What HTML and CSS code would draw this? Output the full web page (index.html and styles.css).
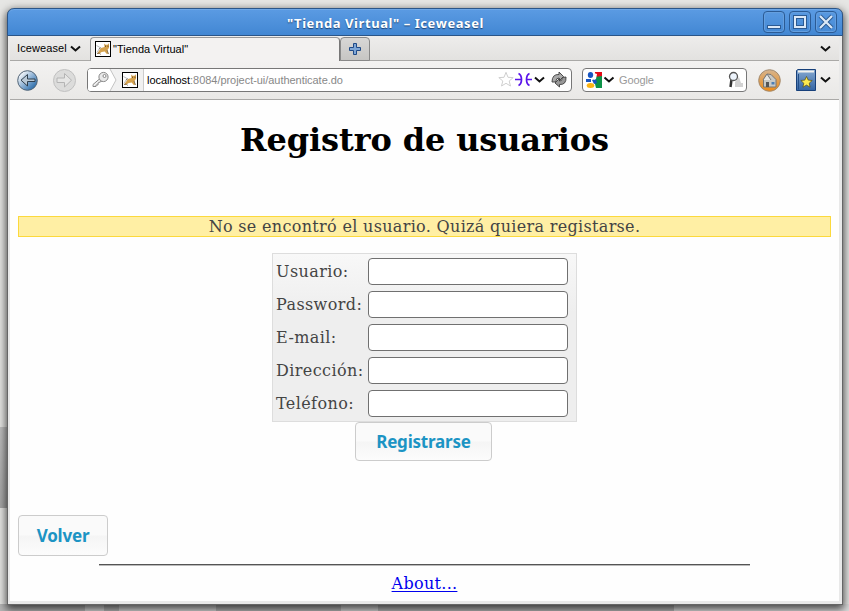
FILE: index.html
```
<!DOCTYPE html>
<html lang="es">
<head>
<meta charset="utf-8">
<title>"Tienda Virtual" - Iceweasel</title>
<link rel="stylesheet" href="styles.css">
</head>
<body>
<svg class="defs" width="0" height="0">
  <defs>
    <linearGradient id="blue" x1="0" y1="0" x2="1" y2="1"><stop offset="0.2" stop-color="#e8eef5"/><stop offset="0.55" stop-color="#81a9d0"/><stop offset="1" stop-color="#08549b"/></linearGradient>
    <linearGradient id="orange" x1="0" y1="0" x2="0" y2="1"><stop offset="0" stop-color="#d5b48f"/><stop offset="1" stop-color="#f08b14"/></linearGradient>
    <linearGradient id="book" x1="0" y1="0" x2="0" y2="1"><stop offset="0" stop-color="#86a9d0"/><stop offset="1" stop-color="#3465a4"/></linearGradient>
    <symbol id="cat" viewBox="0 0 16 16"><rect x="0.5" y="0.5" width="15" height="15" fill="#fff" stroke="#000"/><path d="M1.500 4.500 5 6.500 2 11.500" fill="none" stroke="#bbb"/><path d="M9 2.500l1.500 1.200h2L14 2.300v4.500L12.500 9l1 4-2-.3-1.800-2.200-3 .5-3 2H2l1.200-2L6 7l3.500-1z" fill="#d5a24d"/><path d="M2 12.500l2-.5 2 1.500M4 8l2-1.500M12 9l1.500 4" fill="none" stroke="#665a4d" stroke-width=".7"/><path d="M10 5.200h1m1.500 0h1" stroke="#513719"/></symbol>
    <symbol id="chev" viewBox="0 0 11 8"><path d="M1 1.500 5.500 5.500 10 1.500" fill="none" stroke="#111" stroke-width="2"/></symbol>
  </defs>
</svg>
<div class="desktop">
<div class="window">
  <header class="titlebar">
    <div class="title">"Tienda Virtual" – Iceweasel</div>
    <div class="controls">
      <span class="ctl"><svg viewBox="0 0 20 20"><path d="M3 15h14" stroke="#2c5a92" stroke-width="4"/><path d="M4 15h12" stroke="#dce9f7" stroke-width="2"/></svg></span>
      <span class="ctl"><svg viewBox="0 0 20 20"><rect x="5" y="5" width="10" height="10" fill="none" stroke="#2c5a92" stroke-width="4"/><rect x="5" y="5" width="10" height="10" fill="none" stroke="#dce9f7" stroke-width="2"/></svg></span>
      <span class="ctl"><svg viewBox="0 0 20 20"><path d="M4 4l12 12M16 4L4 16" stroke="#2c5a92" stroke-width="4"/><path d="M4 4l12 12M16 4L4 16" stroke="#dce9f7" stroke-width="2.200"/></svg></span>
    </div>
  </header>
  <div class="tabs">
    <div class="menu"><span>Iceweasel</span><svg width="11" height="8"><use href="#chev"/></svg></div>
    <div class="tab"><svg width="16" height="16"><use href="#cat"/></svg><span>"Tienda Virtual"</span></div>
    <div class="newtab"><svg width="12" height="12" viewBox="0 0 12 12"><path d="M4.500.5h3v4h4v3h-4v4h-3v-4h-4v-3h4z" fill="#7ea6d6" stroke="#204a87"/></svg></div>
    <div class="alltabs"><svg width="11" height="8"><use href="#chev"/></svg></div>
  </div>
  <nav class="navbar">
    <svg class="back" width="21" height="21" viewBox="0 0 21 21"><circle cx="10.500" cy="10.500" r="9.800" fill="url(#blue)" stroke="#4f6275"/><path d="M10.500 4.500V9H18v2.500h-7.500V16L4 10.200z" fill="#b9c8d6" stroke="#30404f"/></svg>
    <svg class="fwd" width="23" height="23" viewBox="0 0 23 23"><circle cx="11.500" cy="11.500" r="11" fill="#dcdcdb" stroke="#c0c0c0"/><path d="M11.500 4.500v4.500H4v4.500h7.500V18l7-6.800z" fill="#e6e6e5" stroke="#b4b4b4"/></svg>
    <div class="field url">
      <div class="ident">
        <svg class="key" width="29" height="22" viewBox="0 0 29 22"><path d="M0 0h22l6 11-6 11H0z" fill="#fff"/><path d="M22 0l6 11-6 11" fill="none" stroke="#c4c4c4"/><path d="M12 9.500 5 15.500v2h3v-1.500h2v-2l4-2" fill="#eee" stroke="#888"/><circle cx="15.500" cy="8" r="4.600" fill="#e9e9e9" stroke="#888"/><circle cx="16.500" cy="7" r="1.500" fill="#fff" stroke="#888"/></svg>
        <svg class="fav" width="16" height="16"><use href="#cat"/></svg>
      </div>
      <div class="address"><b>localhost</b>:8084/project-ui/authenticate.do</div>
      <svg class="tools" width="73" height="22" viewBox="0 0 73 22">
        <path d="M8 3.300l2 5 5.200.3-4 3.400 1.300 5L8 14.300l-4.500 2.700 1.300-5-4-3.400 5.200-.3z" fill="#fff" stroke="#cfcfcf"/>
        <path d="M17 10.500h7M28 10.500h6M20.500 4.500q3 1.500 3 6t-3 6M31.500 4.500q-3 1.500-3 6t3 6" fill="none" stroke="#5a14ea" stroke-width="1.700"/>
        <path d="M37 8.500l4.500 4L46 8.500" fill="none" stroke="#111" stroke-width="2"/>
        <path d="M54 13Q54 5 61 5.500V3l4.500 4.500L61 12V9q-2.500-.5-3.500 4z" fill="#aaa" stroke="#3d3d3d" stroke-width=".9"/><path d="M68 8q.5 8-6.500 7.500V18L57 14l4.500-4.500V12q2.500.5 3-3.500z" fill="#999" stroke="#3d3d3d" stroke-width=".9"/>
      </svg>
    </div>
    <div class="field search">
      <svg width="30" height="22" viewBox="0 0 30 22"><path d="M8 3h8v8H8z" fill="#e30b17"/><path d="M8 8l8-1v12H6z" fill="#0c9247"/><path d="M0 3h9l-1 8 2 8H0z" fill="#fff"/><ellipse cx="4.500" cy="6" rx="2.700" ry="3" fill="#1755c2"/><path d="M6 11l4-1 1 4-3 1zM0 10h5v3H0z" fill="#1755c2"/><ellipse cx="4.500" cy="16.500" rx="3.800" ry="2.500" fill="#fcb414"/><path d="M8 4l3 1-1 5-2 1z" fill="#fff"/><path d="M18.500 8.500l4.500 4L27.500 8.500" fill="none" stroke="#111" stroke-width="2"/></svg>
      <span class="ph">Google</span>
      <svg width="17" height="18" viewBox="0 0 17 18"><path d="M8 11l4-5 2 6h2v4H8z" fill="#d2d2d2"/><path d="M4.500 8.500 3.500 16" stroke="#333" stroke-width="2.500"/><circle cx="6.500" cy="5.500" r="4" fill="#edf4fc" stroke="#555" stroke-width="1.300"/></svg>
    </div>
    <svg class="home" width="23" height="23" viewBox="0 0 23 23"><circle cx="11.500" cy="11.500" r="10.800" fill="url(#orange)" stroke="#a18a70"/><path d="M5.500 10.500 9 5l4 .5 5 5v7.500h-12.500z" fill="#c9c9c5" stroke="#777"/><path d="M5 11 9 5l4 6" fill="#e6e6e3" stroke="#777"/><path d="M8 13h3v5H8z" fill="#555"/><path d="M13.500 13h3v2.500h-3z" fill="#4c7eb6"/></svg>
    <svg class="book" width="20" height="22" viewBox="0 0 20 22"><path d="M.5 1.500 2 .5h17.500v21H.5z" fill="url(#book)" stroke="#17407a"/><path d="M2 1.500h16v2H2z" fill="#f1f1ee"/><path d="M2.500 5v15.500" stroke="#244f88"/><path d="M10.500 7.500l1.700 3.600 4 .4-3 2.700.9 4-3.600-2.100-3.600 2.100.9-4-3-2.700 4-.4z" fill="#fce94f" stroke="#554a13" stroke-width=".7"/></svg>
    <svg class="bchev" width="11" height="8"><use href="#chev"/></svg>
  </nav>
  <main class="page">
    <h1>Registro de usuarios</h1>
    <div class="notice"><span>No se encontró el usuario. Quizá quiera registarse.</span></div>
    <form class="form">
      <label for="u">Usuario:</label><input id="u" type="text">
      <label for="p">Password:</label><input id="p" type="password">
      <label for="e">E-mail:</label><input id="e" type="text">
      <label for="d">Dirección:</label><input id="d" type="text">
      <label for="t">Teléfono:</label><input id="t" type="text">
    </form>
    <button class="btn submit">Registrarse</button>
    <button class="btn return">Volver</button>
    <hr>
    <a href="#">About...</a>
  </main>
</div>
</div>
</body>
</html>
```
FILE: styles.css
```
* { box-sizing: border-box; }
body { margin: 0; overflow: hidden; font-family: "Liberation Sans", sans-serif; }
svg { display: block; flex: none; }
.defs { position: absolute; }
.desktop {
  height: 611px;
  padding: 8px 6px 0 7px;
  background:
    linear-gradient(90deg, #b5b5b5 85px, #d6d6d6 85px 104px, #b5b5b5 104px 119px, #d6d6d6 119px 216px, #b5b5b5 216px 341px, #d6d6d6 341px 378px, #b5b5b5 378px 674px, #dcdcdc 674px) 0 604px / 100% 7px no-repeat,
    linear-gradient(#c0c0c0, #a6a6a6) 0 427px / 7px 81px no-repeat,
    #e6e6e4;
}
.window {
  width: 836px;
  height: 597px;
  display: flex;
  flex-direction: column;
  border: 1px solid #666;
  border-top: 0;
  border-radius: 7px 7px 0 0;
  background: #e9e9e9;
  box-shadow: 0 3px 9px 1px rgba(0, 0, 0, .7);
}
.titlebar {
  flex: none;
  height: 28px;
  margin: 0 -1px;
  display: grid;
  grid-template-columns: 1fr auto;
  border: 1px solid #2a5588;
  border-radius: 7px 7px 0 0;
  background: linear-gradient(#5b9be3, #4287d3);
  box-shadow: inset 0 1px #6ea8e8;
}
.title {
  text-align: center;
  color: #fff;
  font: bold 13px/28px "Noto Sans", sans-serif;
  letter-spacing: .57px;
  text-shadow: 0 1px 1px #1d4474;
}
.controls { display: flex; gap: 4px; padding: 2px 5px 0 0; }
.ctl {
  width: 22px;
  height: 22px;
  border: 1px solid #2b5b95;
  border-radius: 4px;
  box-shadow: inset 0 0 0 1px #659fdf;
}
.ctl svg { width: 20px; height: 20px; }
.tabs {
  flex: none;
  height: 25px;
  margin: 0 3px 0 2px;
  display: flex;
  background: linear-gradient(#eeedec, #e2e1df);
  box-shadow: inset 0 -1px #aaa9a7;
  font-size: 11px;
}
.menu { width: 80px; display: flex; gap: 3px; padding: 1px 0 0 7px; line-height: 23px; letter-spacing: .1px; }
.menu svg, .alltabs svg { margin-top: 8px; }
.tab {
  width: 250px;
  height: 25px;
  margin-top: 1px;
  display: flex;
  gap: 2px;
  padding: 3px 0 0 4px;
  border: 1px solid #999;
  border-right-color: #777;
  border-bottom: 0;
  border-radius: 4px 4px 0 0;
  background: #f3f2f1;
  line-height: 17px;
}
.newtab {
  width: 30px;
  height: 24px;
  margin: 1px 0 0;
  padding: 5px 0 0 8px;
  border: 1px solid #888;
  border-radius: 4px 4px 0 0;
  background: linear-gradient(#d8d7d6, #c6c5c3);
}
.alltabs { margin-left: auto; padding-right: 8px; }
.alltabs svg { margin-top: 9px; }
.navbar {
  flex: none;
  height: 39px;
  margin: 0 3px 0 2px;
  display: flex;
  align-items: center;
  padding: 0 0 1px 7px;
  background: linear-gradient(#f3f2f1, #e9e8e6);
  box-shadow: inset 0 -1px #aaa9a7;
}
.fwd { margin-left: 15px; }
.field {
  display: flex;
  align-items: center;
  height: 24px;
  border: 1px solid #777;
  border-radius: 4px;
  background: #fff;
  overflow: hidden;
  font-size: 11px;
}
.url { width: 485px; margin-left: 11px; }
.ident { display: flex; align-items: center; width: 56px; height: 22px; border-right: 1px solid #ccc; background: #f1f1f1; }
.fav { margin-left: 5px; }
.address { flex: 1; padding-left: 3px; color: #888; letter-spacing: -.04px; }
.address b { color: #000; font-weight: normal; }
.search { width: 165px; margin-left: 10px; padding: 0 2px 0 3px; }
.ph { flex: 1; padding-left: 3px; color: #999; letter-spacing: -.1px; }
.home { margin-left: 11px; }
.book { margin-left: 15px; }
.bchev { margin-left: 4px; }
.page {
  flex: 1;
  margin: 0 3px 3px 2px;
  padding: 0 8px;
  display: flex;
  flex-direction: column;
  align-items: center;
  background: #fefefe;
  color: #444;
  font-family: "DejaVu Serif", serif;
  font-size: 16px;
}
h1 { margin: 21px 0 0; color: #000; font-size: 32px; line-height: 38px; letter-spacing: -.12px; white-space: nowrap; }
.notice {
  width: 813px;
  height: 21px;
  margin-top: 57px;
  border: 1px solid #fcd93c;
  background: #ffefa4;
  text-align: center;
  line-height: 19px;
  letter-spacing: .32px;
}
.form {
  width: 305px;
  height: 169px;
  margin-top: 16px;
  display: grid;
  grid-template-columns: 90px 201px;
  grid-auto-rows: 27px;
  column-gap: 2px;
  row-gap: 6px;
  padding: 4px 3px;
  border: 1px solid #ddd;
  background: linear-gradient(#f8f8f8, #eee 35%);
}
.form label { line-height: 27px; white-space: nowrap; letter-spacing: .4px; }
.form input {
  width: 200px;
  height: 27px;
  border: 1px solid #707070;
  border-radius: 4px;
  background: #fff;
}
.btn {
  padding: 0;
  border: 1px solid #ccc;
  border-radius: 4px;
  background: linear-gradient(#fafafa 48%, #f5f5f5 52%, #fcfcfc);
  color: #1c94c4;
  font: bold 17px/37px "Noto Sans", sans-serif;
  letter-spacing: -.2px;
}
.submit { width: 137px; height: 39px; margin-right: 2px; }
.return { width: 90px; height: 41px; margin-top: 54px; align-self: flex-start; }
hr { width: 651px; height: 2px; margin: 8px 0 0; border: 0; border-top: 1px solid #555; background: #bbb; }
.page a { margin-top: 8px; color: #00e; line-height: 19px; letter-spacing: .3px; text-underline-offset: 2px; }
```
